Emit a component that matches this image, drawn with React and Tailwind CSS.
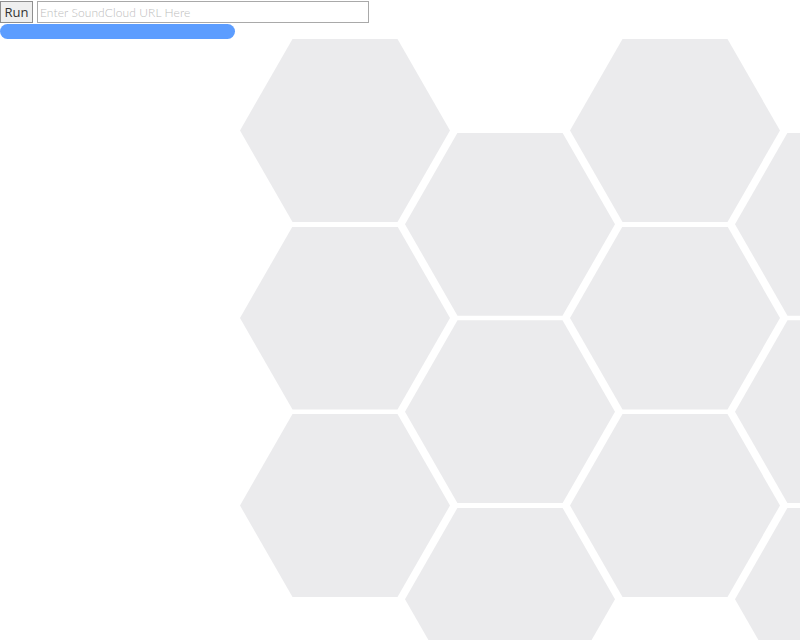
const HEX = "w-[210px] h-[183px] shrink-0 bg-[#ebebed] [clip-path:polygon(25%_0,75%_0,100%_50%,75%_100%,25%_100%,0_50%)]";

function Column({ offset, first }) {
  return (
    <div
      className={
        "flex flex-col gap-[4.5px] shrink-0 " +
        (offset ? "mt-[93.75px] " : "") +
        (first ? "" : "ml-[-45px]")
      }
    >
      <div className={HEX} />
      <div className={HEX} />
      <div className={HEX} />
    </div>
  );
}

export default function App() {
  return (
    <div className="w-[800px] h-[640px] overflow-hidden bg-white font-['Lato','Noto_Sans',sans-serif]">
      <div className="flex items-start h-[24px] pt-[1px] gap-[4px]">
        <button className="w-[33px] h-[22px] bg-[#efefef] border border-[#8f8f8f] text-[13px] text-[#333] font-normal leading-none font-['Open_Sans','Noto_Sans',sans-serif]">
          Run
        </button>
        <input
          className="w-[332px] h-[22px] border border-[#a9a9a9] px-[2px] text-[12px] placeholder:text-[#bdbdbd] outline-none font-['Lato','Noto_Sans',sans-serif] font-light tracking-[0.1px]"
          placeholder="Enter SoundCloud URL Here"
        />
      </div>
      <div className="w-[235px] h-[15px] rounded-full bg-[#5c9dff]" />
      <div className="flex ml-[240px]">
        <Column first />
        <Column offset />
        <Column />
        <Column offset />
        <Column />
      </div>
    </div>
  );
}
